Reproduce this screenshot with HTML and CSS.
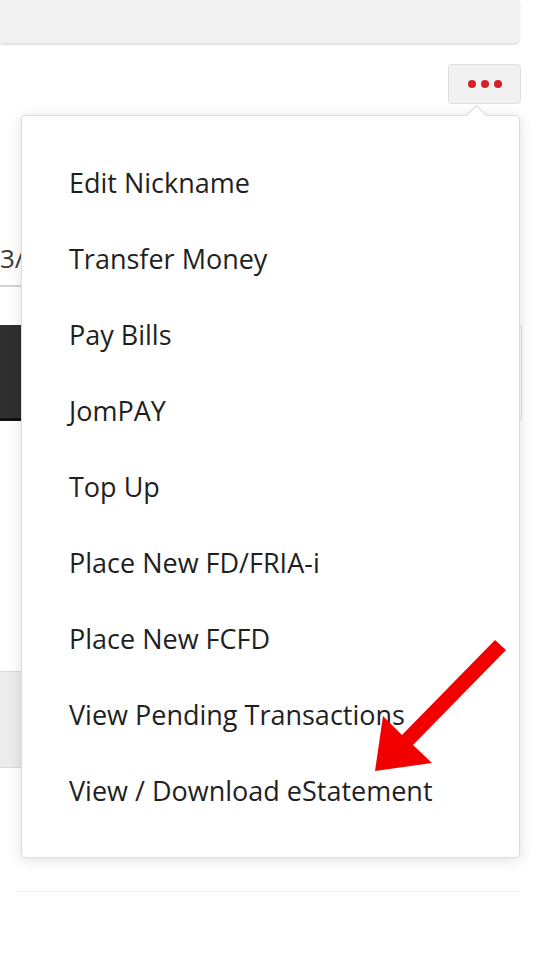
FILE: index.html
```html
<!DOCTYPE html>
<html lang="en">
  <head>
    <meta charset="utf-8">
    <link rel="stylesheet" href="styles.css">
    <title>Account actions</title>
  </head>
  <body>
    <div class="summary"></div>

    <div class="toolbar">
      <div class="more">
        <button class="more-button" type="button" aria-label="More actions">
          <span class="dot"></span><span class="dot"></span><span class="dot"></span>
        </button>
        <ul class="menu">
          <li>Edit Nickname</li>
          <li>Transfer Money</li>
          <li>Pay Bills</li>
          <li>JomPAY</li>
          <li>Top Up</li>
          <li>Place New FD/FRIA-i</li>
          <li>Place New FCFD</li>
          <li>View Pending Transactions</li>
          <li>View / Download eStatement</li>
        </ul>
      </div>
    </div>

    <div class="account">
      <div class="date-field"><span class="date-text">3/</span></div>
      <div class="button-row">
        <div class="btn-dark"></div>
        <div class="btn-light"></div>
      </div>
      <div class="info-box"></div>
      <div class="divider"></div>
    </div>

    <!-- annotation arrow drawn over the screenshot -->
    <svg class="pointer" width="540" height="960" viewBox="0 0 540 960">
      <polygon points="495,640 506,650 413,745 432,763 375,771 383,716 402,735" fill="#f20000"/>
    </svg>
  </body>
</html>
```

FILE: styles.css
```css
body{
  margin: 0;
  background-color: #ffffff;
  font-family: 'Open Sans', 'Liberation Sans', sans-serif;
  color: #1f1f1f;
  width: 540px;
  height: 960px;
  overflow: hidden;
  position: relative;
}
.summary{
  height: 43px;
  margin-right: 20px;
  background-color: #f2f2f2;
  border-radius: 0 0 6px 0;
  box-shadow: 0 2px 2px rgba(0, 0, 0, 0.12);
}
.toolbar{
  display: flex;
  justify-content: flex-end;
  margin-top: 21px;
  padding-right: 19px;
  position: relative;
  z-index: 2;
}
.more{
  position: relative;
}
.more-button{
  width: 73px;
  height: 40px;
  border: 1px solid #dedede;
  border-radius: 4px;
  background-color: #f1f1f1;
  display: flex;
  justify-content: center;
  align-items: center;
  gap: 5px;
  padding: 0;
}
.dot{
  width: 8px;
  height: 8px;
  border-radius: 50%;
  background-color: #d5202b;
}
.menu{
  position: absolute;
  top: 51px;
  right: 1px;
  width: 499px;
  box-sizing: border-box;
  margin: 0;
  padding: 29px 0 28px;
  list-style: none;
  background-color: #ffffff;
  border: 1px solid #dcdcdc;
  border-radius: 4px;
  box-shadow: 0 2px 14px rgba(0, 0, 0, 0.13);
}
/* little caret pointing at the button */
.menu::before{
  content: '';
  position: absolute;
  top: -8px;
  right: 35px;
  width: 14px;
  height: 14px;
  background-color: #ffffff;
  border-left: 1px solid #d6d6d6;
  border-top: 1px solid #d6d6d6;
  transform: rotate(45deg);
}
.menu li{
  height: 76px;
  line-height: 76px;
  padding-left: 47px;
  font-size: 27px;
  white-space: nowrap;
}
.account{
  position: relative;
  z-index: 1;
}
.date-field{
  margin-top: 128px;
  height: 53px;
  line-height: 53px;
  font-size: 26px;
  color: #3a3a3a;
  border-bottom: 2px solid #d4d4d4;
  margin-right: 40px;
}
.button-row{
  display: flex;
  gap: 12px;
  margin-top: 38px;
  margin-right: 18px;
}
.btn-dark{
  flex: 1;
  height: 93px;
  background-color: #2f2f2f;
  border-bottom: 3px solid #111111;
}
.btn-light{
  flex: 1;
  height: 94px;
  border: 1px solid #d8d8d8;
  border-radius: 3px;
}
.info-box{
  margin-top: 250px;
  height: 95px;
  border-top: 1px solid #d9d9d9;
  border-bottom: 1px solid #d9d9d9;
  background: linear-gradient(to right, #ececec, #f6f6f6);
  margin-right: 20px;
}
.divider{
  margin: 123px 20px 0 15px;
  border-top: 1px solid #f3f3f3;
}
.pointer{
  position: absolute;
  top: 0;
  left: 0;
  z-index: 3;
  pointer-events: none;
}
```
